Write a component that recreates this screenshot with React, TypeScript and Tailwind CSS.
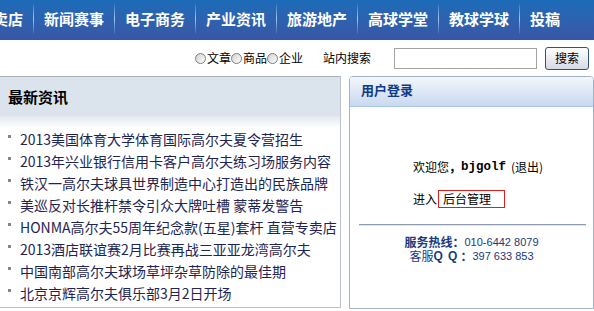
import React from 'react';

const navItems = ['专卖店', '新闻赛事', '电子商务', '产业资讯', '旅游地产', '高球学堂', '教球学球', '投稿'];

const news = [
    '2013美国体育大学体育国际高尔夫夏令营招生',
    '2013年兴业银行信用卡客户高尔夫练习场服务内容',
    '铁汉一高尔夫球具世界制造中心打造出的民族品牌',
    '美巡反对长推杆禁令引众大牌吐槽 蒙蒂发警告',
    'HONMA高尔夫55周年纪念款(五星)套杆 直营专卖店',
    '2013酒店联谊赛2月比赛再战三亚亚龙湾高尔夫',
    '中国南部高尔夫球场草坪杂草防除的最佳期',
    '北京京辉高尔夫俱乐部3月2日开场',
];

const searchTypes = ['文章', '商品', '企业'];

const App: React.FC = () => {
    return (
        <div className="w-[594px] h-[311px] overflow-hidden bg-white font-['Noto_Sans_CJK_SC',sans-serif] text-black">
            {/* top nav */}
            <div className="h-[40px] overflow-hidden bg-linear-to-b from-[#1b6cb8] to-[#3757a6]">
                <div className="flex items-center h-[40px] ml-[-32px] pb-[2px]">
                    {navItems.map((item, i) => (
                        <React.Fragment key={item}>
                            <span className="px-[10px] text-[15px] leading-[20px] font-bold text-white whitespace-nowrap">{item}</span>
                            {i < navItems.length - 1 && (
                                <span className="w-px h-[30px] shrink-0 bg-linear-to-b from-[#3a78c0] via-[#a4c6ee] to-[#3a68b6]" />
                            )}
                        </React.Fragment>
                    ))}
                </div>
            </div>

            {/* search row */}
            <div className="h-[36px] flex items-center text-[12px] leading-[14px]">
                <div className="ml-[195px] flex items-center">
                    {searchTypes.map((t) => (
                        <label key={t} className="flex items-center">
                            <span className="w-[11px] h-[11px] mr-[1px] rounded-full border border-[#7e7e7e] bg-linear-to-br from-[#d0d0d0] to-white" />
                            {t}
                        </label>
                    ))}
                </div>
                <span className="ml-[20px]">站内搜索</span>
                <div className="ml-[23px] w-[143px] h-[21px] border border-[#a3a3a3] bg-white" />
                <button className="ml-[8px] w-[44px] h-[23px] rounded-[3px] border border-[#34507c] bg-linear-to-b from-white to-[#d5dae4] text-[12px] leading-[14px] text-black">
                    搜索
                </button>
            </div>

            {/* panels */}
            <div className="flex gap-[8px]">
                <div className="w-[341px] h-[232px] shrink-0 border-t border-r border-b border-t-[#a7afba] border-r-[#bcc3cc] border-b-[#bcc3cc]">
                    <div className="h-[39px] bg-[#dbe4ed] flex items-center pl-[8px]">
                        <span className="text-[15px] leading-[18px] font-bold">最新资讯</span>
                    </div>
                    <div className="h-[12px] bg-linear-to-b from-[#e3e9ef] to-white" />
                    <ul>
                        {news.map((n) => (
                            <li key={n} className="flex h-[22px] items-center whitespace-nowrap text-[14px] leading-[22px] text-[#1e2552]">
                                <span className="self-start mt-[7px] ml-[8px] mr-[9px] w-[3px] h-[3px] bg-[#7d8694]" />
                                {n}
                            </li>
                        ))}
                    </ul>
                </div>

                <div className="w-[245px] h-[233px] shrink-0 border border-[#a3b2c7] rounded-t-[4px] overflow-hidden">
                    <div className="h-[30px] pb-[3px] pl-[11px] flex items-center border-b border-[#a8c1e4] bg-linear-to-b from-[#f3f7fc] to-[#c8d9ef]">
                        <span className="text-[13px] leading-[16px] font-bold text-[#0f3a87]">用户登录</span>
                    </div>

                    <div className="pl-[63px] pt-[50px] text-[12px]">
                        <div className="h-[20px] flex items-center whitespace-nowrap">
                            欢迎您<b>，</b>
                            <b className="font-['Liberation_Mono',monospace] text-[12.5px]">bjgolf</b>
                            <span className="ml-[5px]">(退出)</span>
                        </div>
                        <div className="mt-[13px] h-[18px] flex items-center">
                            进入
                            <span className="ml-[1px] w-[67px] h-[18px] pl-[4px] leading-[16px] border border-[#e31b1b]">后台管理</span>
                        </div>
                    </div>

                    <div className="mt-[16px] ml-[9px] mr-[7px] h-[2px] border-t border-[#8d9bb1] bg-[#dfe4eb]" />

                    <div className="mt-[9px] text-[12px] text-[#1a3a7c] whitespace-nowrap">
                        <div className="h-[14px] flex items-center justify-center leading-[14px]">
                            <b>服务热线：</b>
                            <span className="font-['Liberation_Sans',sans-serif] text-[11px] leading-[14px]">010-6442 8079</span>
                        </div>
                        <div className="h-[14px] flex items-center justify-center leading-[14px]">
                            <span>客服</span>
                            <b className="font-['Liberation_Sans',sans-serif] leading-[14px] tracking-[1px]">Q Q</b>
                            <b className="ml-[2px]">：</b>
                            <span className="font-['Liberation_Sans',sans-serif] text-[11px] leading-[14px]">397 633 853</span>
                        </div>
                    </div>
                </div>
            </div>
        </div>
    );
};

export default App;
